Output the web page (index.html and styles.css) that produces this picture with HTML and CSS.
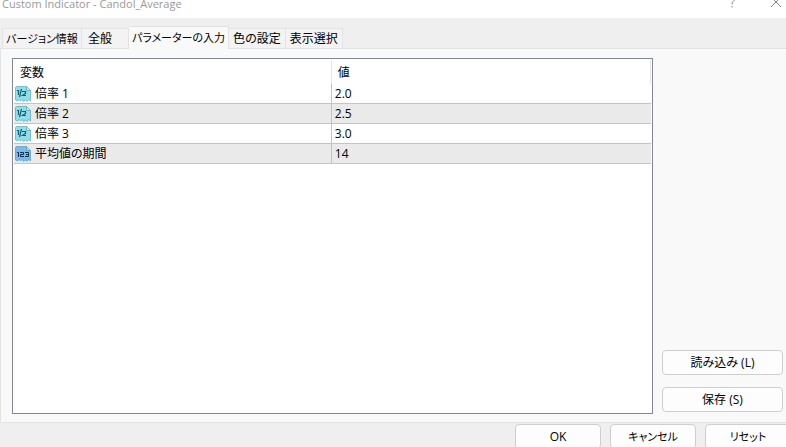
FILE: index.html
```html
<!DOCTYPE html>
<html lang="ja">
<head>
<meta charset="utf-8">
<title>Custom Indicator - Candol_Average</title>
<link rel="stylesheet" href="styles.css">
</head>
<body>
<svg class="symbols" aria-hidden="true">
  <symbol id="sheet" viewBox="0 0 16 16">
    <path d="M1.500 .5H11.500L15.500 4.500V15L13.500 13.500L12 15.500L10.500 14L8.500 15.500L7 13.500L5.500 15L4 13.500L2.500 15L.5 14V1.500Z" fill="currentColor"/>
    <path d="M11.500 .5V4.500H15.500Z" fill="#fff" fill-opacity=".45"/>
    <path d="M1.500 .5H11.500L15.500 4.500V15L13.500 13.500L12 15.500L10.500 14L8.500 15.500L7 13.500L5.500 15L4 13.500L2.500 15L.5 14V1.500ZM11.500 .5V4.500H15.500" fill="none" stroke="#2b8fa8" stroke-opacity=".5"/>
  </symbol>
  <symbol id="half" viewBox="0 0 16 16">
    <use href="#sheet"/>
    <path d="M2 4.500H3.500V9M6.500 3L4.500 11M7 5.500H10.500V7.500L7.500 9.500H11" fill="none" stroke="#17606f" stroke-width="1.2"/>
  </symbol>
  <symbol id="integer" viewBox="0 0 16 16">
    <use href="#sheet"/>
    <path d="M2 6.500H3.500V11M5 6.500H8.500V8.500H5.500V10.500H9M10 6.500H13.500V10.500H10M11 8.500H13.500" fill="none" stroke="#0b3050"/>
  </symbol>
</svg>
<div class="dialog">
  <header class="titlebar">
    <h1 class="title">Custom Indicator - Candol_Average</h1>
    <button class="caption" aria-label="ヘルプ"><svg width="12" height="12" viewBox="0 0 12 12"><path d="M3.500 3Q3.500 .5 6 .5T8.500 3Q8.500 4.500 7 5.500Q6 6.500 6 8.500M6 10V11.500" fill="none" stroke="currentColor"/></svg></button>
    <button class="caption" aria-label="閉じる"><svg width="12" height="12" viewBox="0 0 12 12"><path d="M1 1L11 11M11 1L1 11" fill="none" stroke="currentColor"/></svg></button>
  </header>
  <nav class="tabs" role="tablist">
    <button class="tab tab-about kana" role="tab">バージョン情報</button>
    <button class="tab tab-general" role="tab">全般</button>
    <button class="tab tab-active kana" role="tab" aria-selected="true">パラメーターの入力</button>
    <button class="tab" role="tab">色の設定</button>
    <button class="tab" role="tab">表示選択</button>
  </nav>
  <main class="panel">
    <div class="list">
      <table class="grid">
        <thead>
          <tr><th class="name">変数</th><th>値</th></tr>
        </thead>
        <tbody>
          <tr><td><span class="cell"><svg class="icon" width="16" height="16"><use href="#half"/></svg>倍率 1</span></td><td>2.0</td></tr>
          <tr><td><span class="cell"><svg class="icon" width="16" height="16"><use href="#half"/></svg>倍率 2</span></td><td>2.5</td></tr>
          <tr><td><span class="cell"><svg class="icon" width="16" height="16"><use href="#half"/></svg>倍率 3</span></td><td>3.0</td></tr>
          <tr><td><span class="cell"><svg class="icon icon-blue" width="16" height="16"><use href="#integer"/></svg>平均値の期間</span></td><td>14</td></tr>
        </tbody>
      </table>
    </div>
    <div class="side">
      <button class="btn">読み込み (L)</button>
      <button class="btn">保存 (S)</button>
    </div>
  </main>
  <footer class="footer">
    <button class="btn">OK</button>
    <button class="btn kana">キャンセル</button>
    <button class="btn kana">リセット</button>
  </footer>
</div>
</body>
</html>
```
FILE: styles.css
```css
* {
  box-sizing: border-box;
}

body,
button {
  font-family: "Open Sans", "Noto Sans CJK JP", sans-serif;
  font-size: 12px;
  font-feature-settings: "palt";
  color: #000;
}

body {
  margin: 0;
  overflow: hidden;
}

.symbols {
  position: absolute;
  width: 0;
  height: 0;
}

.dialog {
  display: flex;
  flex-direction: column;
  height: 100vh;
  background: #efefef;
}

.titlebar {
  display: flex;
  align-items: flex-start;
  gap: 32px;
  height: 18px;
  padding: 0 4px 0 2px;
  overflow: hidden;
  background: #fff;
  color: #999;
}

.title {
  flex: 1;
  margin: 0;
  font-size: 11px;
  font-weight: 400;
  line-height: 8px;
}

.caption {
  display: flex;
  align-items: flex-end;
  height: 8px;
  padding: 0;
  border: 0;
  background: none;
  color: #858585;
}

.caption svg {
  flex: none;
}

.tabs {
  display: flex;
  align-items: flex-end;
  height: 30px;
  padding-left: 2px;
}

.tab {
  height: 20px;
  padding: 0 4px;
  border: 1px solid #e3e3e3;
  border-width: 1px 1px 0 0;
  background: #f3f3f3;
  line-height: 19px;
  white-space: nowrap;
}

.tab:first-child {
  border-left-width: 1px;
}

.tab-general {
  padding: 0 16px 0 6px;
}

.kana {
  font-size: 11px;
}

.tab-about {
  min-width: 80px;
  padding: 0 3px;
}

.tab-active {
  height: 23px;
  min-width: 100px;
  margin-bottom: -1px;
  padding: 0 3px 2px;
  background: #f9f9f9;
  z-index: 1;
}

.panel {
  display: flex;
  flex: 1;
  gap: 9px;
  min-height: 0;
  padding: 9px 3px 8px 11px;
  border: 1px solid #e3e3e3;
  border-right: 0;
  background: #f9f9f9;
}

.list {
  flex: 1;
  padding: 1px;
  border: 1px solid #828790;
  background: #fff;
}

.grid {
  width: 100%;
  border-collapse: separate;
  border-spacing: 0;
  table-layout: fixed;
}

.grid th {
  height: 24px;
  padding: 0 6px;
  border-right: 1px solid #e5e5e5;
  font-weight: 400;
  text-align: left;
}

.grid .name {
  width: 49.9%;
}

.grid td {
  height: 20px;
  padding: 0 3px;
  border-bottom: 1px solid #c4c4c4;
  line-height: 19px;
}

.grid td:first-child {
  padding-left: 1px;
  border-right: 1px solid #c4c4c4;
}

.grid tbody tr:nth-child(even) {
  background: #eaeaea;
}

.cell {
  display: flex;
  align-items: center;
  gap: 4px;
}

.icon {
  color: #8fdee9;
}

.icon-blue {
  color: #80b8ed;
}

.side {
  display: flex;
  flex-direction: column;
  justify-content: flex-end;
  gap: 12px;
  width: 121px;
  padding-bottom: 2px;
}

.btn {
  height: 25px;
  padding: 0 8px;
  border: 1px solid #cecece;
  border-radius: 4px;
  background: #fdfdfd;
  line-height: 22px;
  white-space: nowrap;
}

.footer {
  display: flex;
  justify-content: flex-end;
  gap: 9px;
  height: 24px;
  margin-right: -5px;
  padding-top: 1px;
}

.footer .btn {
  width: 86px;
}
```
